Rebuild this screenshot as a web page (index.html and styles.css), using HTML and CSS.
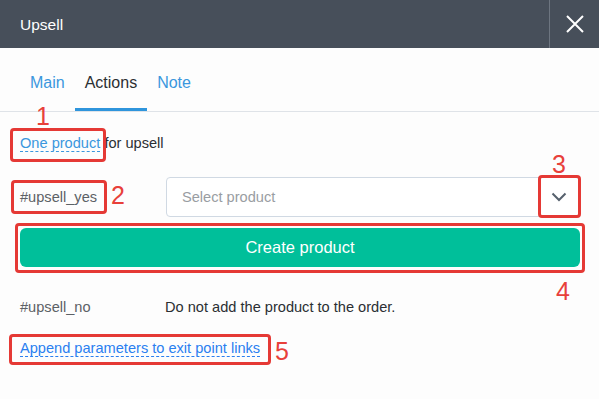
FILE: index.html
```html
<!DOCTYPE html>
<html>
<head>
<meta charset="utf-8">
<link rel="stylesheet" href="styles.css">
</head>
<body>
<div class="modal">
  <header class="head">
    <div class="title">Upsell</div>
    <button class="close" aria-label="Close">
      <svg width="18" height="18" viewBox="0 0 18 18"><path d="M1 1L17 17M17 1L1 17" stroke="#fff" stroke-width="2" fill="none"/></svg>
    </button>
  </header>
  <nav class="tabs">
    <a class="tab">Main</a>
    <a class="tab active">Actions</a>
    <a class="tab">Note</a>
  </nav>
  <main class="content">
    <div class="row r1"><span class="dlink">One product</span>&nbsp;for upsell</div>
    <div class="row r2">
      <span class="label">#upsell_yes</span>
      <div class="select"><span class="ph">Select product</span>
        <svg class="chev" width="16" height="10" viewBox="0 0 16 10"><path d="M1.5 1.5L8 8L14.5 1.5" stroke="#56616d" stroke-width="2" fill="none"/></svg>
      </div>
    </div>
    <button class="create">Create product</button>
    <div class="row r3">
      <span class="label">#upsell_no</span>
      <span class="desc">Do not add the product to the order.</span>
    </div>
    <div class="row r4"><span class="dlink blue">Append parameters to exit point links</span></div>

    <div class="ann box b1"></div><div class="ann num n1">1</div>
    <div class="ann box b2"></div><div class="ann num n2">2</div>
    <div class="ann box b3"></div><div class="ann num n3">3</div>
    <div class="ann box b4"></div><div class="ann num n4">4</div>
    <div class="ann box b5"></div><div class="ann num n5">5</div>
  </main>
</div>
</body>
</html>
```

FILE: styles.css
```css
* { box-sizing: border-box; }
html, body { margin: 0; padding: 0; }
body {
  background: #fdfdfd;
  font-family: "Liberation Sans", Arial, sans-serif;
  font-size: 14.6px;
  color: #2b2f33;
  width: 599px;
  height: 399px;
  overflow: hidden;
}
.head {
  height: 48px;
  background: #474f5a;
  display: flex;
  align-items: center;
  justify-content: space-between;
}
.title {
  color: #fff;
  font-size: 15.5px;
  padding-left: 20px;
  padding-top: 1px;
}
.close {
  width: 50px;
  height: 48px;
  border: 0;
  border-left: 1px solid #6d7580;
  background: transparent;
  display: flex;
  align-items: center;
  justify-content: center;
  padding: 0;
}
.tabs {
  height: 64px;
  display: flex;
  padding-left: 20px;
  border-bottom: 1px solid #dfe3e8;
}
.tab {
  padding: 9px 10px 0;
  display: flex;
  align-items: center;
  font-size: 16px;
  color: #3b97dd;
  border-bottom: 3px solid transparent;
}
.tab.active {
  color: #2b2f33;
  border-bottom-color: #2f95dc;
}
.content {
  position: relative;
  padding: 0 19px 0 20px;
}
.row { display: flex; align-items: center; }
.r1 { height: 62px; }
.dlink {
  color: #3b97dd;
  border-bottom: 1px dashed #3b97dd;
  line-height: 16px;
}
.dlink.blue { color: #2a7ff0; border-bottom-color: #2a7ff0; }
.r2 { height: 40px; margin-top: 3px; }
.label { color: #5c6166; width: 146px; flex: none; }
.select {
  flex: 1;
  height: 40px;
  border: 1px solid #d0d9e3;
  border-radius: 4px;
  background: #fff;
  display: flex;
  align-items: center;
  justify-content: space-between;
  padding: 0 12px 0 15px;
}
.ph { color: #999da2; }
.create {
  display: block;
  width: 560px;
  height: 39px;
  margin-top: 11px;
  border: 0;
  border-radius: 6px;
  background: #00bf9a;
  color: #fff;
  font-family: inherit;
  font-size: 16.5px;
}
.r3 { height: 40px; margin-top: 20px; }
.desc { color: #2b2f33; margin-left: -1px; }
.r4 { height: 36px; margin-top: 3px; }

.ann { position: absolute; }
.box { border: 3px solid #e53935; border-radius: 4px; }
.num {
  color: #e8403a;
  font-size: 25px;
  line-height: 24px;
  font-family: "Liberation Sans", Arial, sans-serif;
}
.b1 { left: 10px; top: 16px; width: 96px; height: 34px; }
.n1 { left: 36px; top: -8px; }
.b2 { left: 11px; top: 68px; width: 96px; height: 34px; }
.n2 { left: 111px; top: 71px; }
.b3 { left: 538px; top: 63px; width: 43px; height: 43px; }
.n3 { left: 552px; top: 40px; }
.b4 { left: 15px; top: 111px; width: 570px; height: 50px; }
.n4 { left: 556px; top: 167px; }
.b5 { left: 9px; top: 222px; width: 262px; height: 31px; }
.n5 { left: 275px; top: 227px; }
```
